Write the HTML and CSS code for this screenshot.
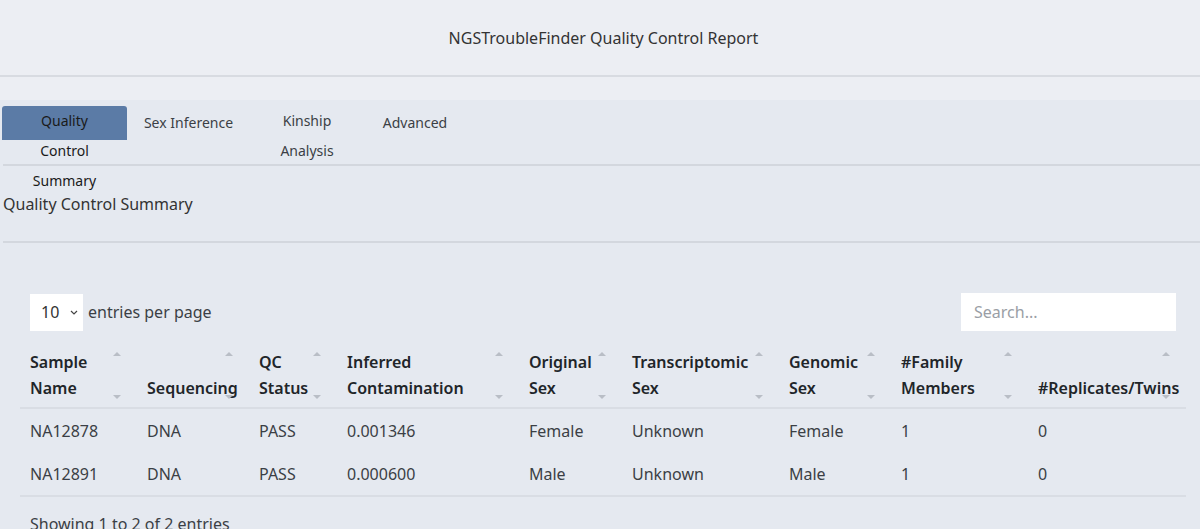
FILE: index.html
```html
<!DOCTYPE html>
<html lang="en">
<head>
<meta charset="utf-8">
<title>NGSTroubleFinder Quality Control Report</title>
<link rel="stylesheet" href="styles.css">
</head>
<body>
<header class="topbar">
  <h1 class="title">NGSTroubleFinder Quality Control Report</h1>
</header>
<div class="topgap"></div>
<main class="content">
  <nav class="tabs">
    <div class="tab tab-active tab-wrap w1">Quality Control Summary</div>
    <div class="tab w2">Sex Inference</div>
    <div class="tab tab-wrap w3">Kinship Analysis</div>
    <div class="tab w4">Advanced</div>
  </nav>
  <section class="panel">
    <h2 class="panel-title">Quality Control Summary</h2>
    <div class="dt">
      <div class="dt-top">
        <div class="dt-length">
          <div class="select"><span>10</span>
            <svg class="chev" width="8" height="5" viewBox="0 0 8 5"><path d="M1 1l3 3 3-3" fill="none" stroke="#444" stroke-width="1.2"/></svg>
          </div>
          <span class="dt-label">entries per page</span>
        </div>
        <div class="search">Search...</div>
      </div>
      <table class="grid">
        <colgroup>
          <col class="c1"><col class="c2"><col class="c3"><col class="c4"><col class="c5"><col class="c6"><col class="c7"><col class="c8"><col class="c9">
        </colgroup>
        <thead>
          <tr>
            <th>Sample Name</th>
            <th>Sequencing</th>
            <th>QC Status</th>
            <th>Inferred Contamination</th>
            <th>Original Sex</th>
            <th>Transcriptomic Sex</th>
            <th>Genomic Sex</th>
            <th>#Family Members</th>
            <th>#Replicates/Twins</th>
          </tr>
        </thead>
        <tbody>
          <tr><td>NA12878</td><td>DNA</td><td>PASS</td><td>0.001346</td><td>Female</td><td>Unknown</td><td>Female</td><td>1</td><td>0</td></tr>
          <tr><td>NA12891</td><td>DNA</td><td>PASS</td><td>0.000600</td><td>Male</td><td>Unknown</td><td>Male</td><td>1</td><td>0</td></tr>
        </tbody>
      </table>
      <div class="dt-bottom">Showing 1 to 2 of 2 entries</div>
    </div>
  </section>
</main>
</body>
</html>
```
FILE: styles.css
```css
* { box-sizing: border-box; }
html, body { margin: 0; padding: 0; }
body {
  background: #e5e9f0;
  color: #3b3f45;
  font-family: "Noto Sans", "Open Sans", sans-serif;
  overflow: hidden;
}
.topbar {
  background: #eceef3;
  height: 77px;
  border-bottom: 2px solid #d8dbe1;
  display: flex;
  align-items: center;
  justify-content: center;
}
.title {
  margin: 0;
  font-size: 16px;
  font-weight: 400;
  color: #333;
  padding: 1px 0 0 7px;
}
.topgap { height: 23px; background: #eceef3; }
.content { margin-left: 3px; }
.tabs {
  display: flex;
  height: 66px;
  padding-top: 6px;
  border-bottom: 2px solid #d3d7de;
}
.tab {
  height: 34px;
  text-align: center;
  font-size: 14px;
  line-height: 30px;
  padding-top: 2px;
  color: #3b3f45;
}
.tab-wrap { padding: 0 18px; }
.tab-active {
  background: #5b7ba6;
  border-radius: 3px 3px 0 0;
  color: #1a1a1a;
  margin-left: -1px;
}
.w1 { width: 125px; }
.w2 { width: 123px; }
.w3 { width: 114px; }
.w4 { width: 102px; }
.panel-title {
  margin: 0;
  font-size: 16px;
  font-weight: 400;
  line-height: 24px;
  padding: 26px 0 25px;
  border-bottom: 2px solid #d3d7de;
  color: #333;
}
.dt { padding: 42px 14px 0 17px; }
.dt-top {
  display: flex;
  justify-content: space-between;
  align-items: center;
  padding: 8px 10px;
}
.dt-length { display: flex; align-items: center; }
.select {
  width: 53px;
  height: 37px;
  background: #fff;
  display: flex;
  align-items: center;
  padding-left: 11px;
  font-size: 16px;
  color: #333;
}
.chev { margin-left: 11px; }
.dt-label { margin-left: 5px; font-size: 16px; color: #3b3f45; }
.search {
  width: 215px;
  height: 38px;
  background: #fff;
  font-size: 16px;
  color: #9a9ea5;
  padding-left: 13px;
  line-height: 38px;
}
.grid {
  width: 1166px;
  table-layout: fixed;
  border-collapse: collapse;
  font-size: 16px;
}
.c1 { width: 117px; } .c2 { width: 112px; } .c3 { width: 88px; }
.c4 { width: 182px; } .c5 { width: 103px; } .c6 { width: 157px; }
.c7 { width: 112px; } .c8 { width: 137px; } .c9 { width: 158px; }
.grid th {
  position: relative;
  text-align: left;
  vertical-align: bottom;
  font-weight: 600;
  color: #212529;
  line-height: 26px;
  padding: 10px 10px 6px;
  border-bottom: 2px solid #d9dde4;
  white-space: normal;
}
.grid th::before, .grid th::after {
  content: "";
  position: absolute;
  right: 16px;
  border-left: 4px solid transparent;
  border-right: 4px solid transparent;
}
.grid th::before { top: 13px; border-bottom: 4px solid #b9bec6; }
.grid th::after { bottom: 8px; border-top: 4px solid #b9bec6; }
.grid td {
  padding: 9px 10px 7px;
  line-height: 27px;
  color: #3b3f45;
}
.grid tbody tr:last-child td { border-bottom: 2px solid #d9dde4; }
.dt-bottom {
  padding: 15px 10px 8px;
  font-size: 16px;
  line-height: 24px;
  color: #3b3f45;
}
```
